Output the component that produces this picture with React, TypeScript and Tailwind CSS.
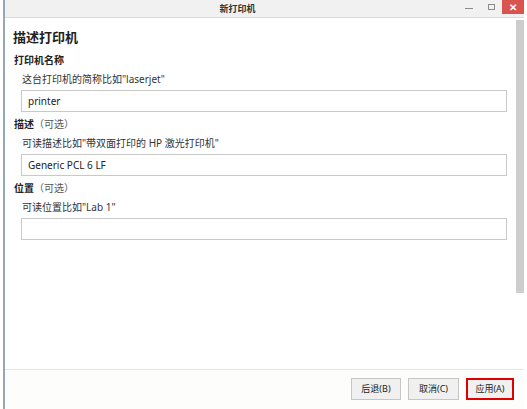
import React from "react";

const font = { fontFamily: '"Noto Sans", "Noto Sans CJK SC", sans-serif' };

function Field({ header, opt, sub, value }: { header: string; opt?: string; sub: string; value: string }) {
  return (
    <div className="flex flex-col">
      <div className="h-[14px] leading-[14px] text-[10px] font-bold text-[#222] pl-[9px]">
        {header}
        {opt && <span className="font-normal text-[#555]">{opt}</span>}
      </div>
      <div className="mt-[5px] h-[14px] leading-[14px] text-[10px] text-[#333] pl-[17px]">{sub}</div>
      <div className="mt-[4px] ml-[16px] mr-[9px] h-[22px] border border-[#c9c9c9] bg-white flex items-center pl-[6px] text-[10px] text-[#222]">
        {value}
      </div>
    </div>
  );
}

export default function App() {
  return (
    <div className="w-[527px] h-[409px] bg-white overflow-hidden" style={font}>
      <div className="ml-[3px] w-[521px] h-[409px] border-l-2 border-[#93a7b9] flex flex-col">
        {/* title bar */}
        <div className="h-[18px] shrink-0 bg-[#f1f1f1] border-b border-[#dadada] flex items-start">
          <div className="flex-1 h-[17px] flex items-center justify-center pl-[12px] text-[9px] font-bold text-[#333]">
            新打印机
          </div>
          <div className="flex items-start h-[17px]">
            <div className="w-[22px] h-[14px] flex items-center justify-center">
              <div className="w-[8px] h-[1px] bg-[#8a8a8a] mt-[2px]" />
            </div>
            <div className="w-[22px] h-[14px] flex items-center justify-center">
              <div className="w-[7px] h-[6px] border border-[#8a8a8a]" />
            </div>
            <div className="w-[22px] h-[14px] bg-[#d9534f] flex items-center justify-center text-white text-[10px] font-bold leading-none">
              ✕
            </div>
          </div>
        </div>
        {/* content */}
        <div className="flex-1 flex min-h-0">
          <div className="flex-1 flex flex-col">
            <div className="mt-[10px] h-[18px] leading-[18px] text-[13px] font-bold text-[#222] pl-[8px]">描述打印机</div>
            <div className="mt-[7px] flex flex-col gap-[5px]">
              <Field header="打印机名称" sub={'这台打印机的简称比如"laserjet"'} value="printer" />
              <Field header="描述" opt="（可选）" sub={'可读描述比如"带双面打印的 HP 激光打印机"'} value="Generic PCL 6 LF" />
              <Field header="位置" opt="（可选）" sub={'可读位置比如"Lab 1"'} value="" />
            </div>
          </div>
          <div className="w-[8px] flex flex-col">
            <div className="mt-[2px] h-[273px] bg-[#cdcdcd]" />
          </div>
        </div>
        {/* bottom */}
        <div className="h-[40px] shrink-0 border-t border-[#e6e6e6] bg-[#fdfdfb] flex items-start justify-end pr-[10px] pt-[8px] gap-[7px]">
          <div className="w-[50px] h-[22px] bg-[#f0f0f0] border border-[#c6c6c6] flex items-center justify-center text-[9px] text-[#222]">
            后退(B)
          </div>
          <div className="w-[51px] h-[22px] bg-[#f0f0f0] border border-[#c6c6c6] flex items-center justify-center text-[9px] text-[#222]">
            取消(C)
          </div>
          <div className="w-[48px] h-[22px] bg-[#f0f0f0] border-2 border-[#e00000] flex items-center justify-center text-[9px] text-[#222]">
            应用(A)
          </div>
        </div>
      </div>
    </div>
  );
}
